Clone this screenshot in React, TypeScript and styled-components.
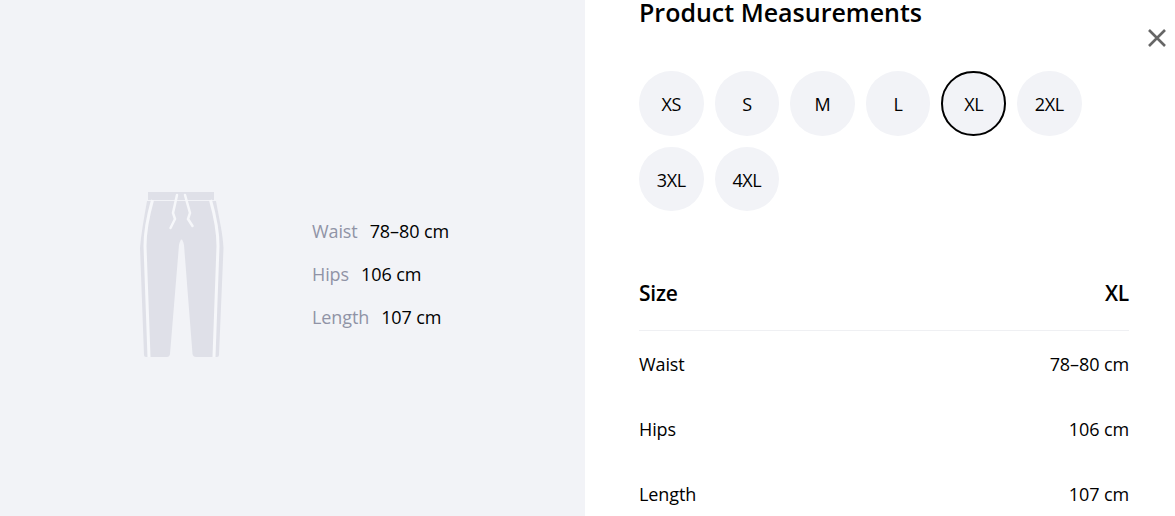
import React from "react";
import styled, { createGlobalStyle } from "styled-components";

const GlobalStyle = createGlobalStyle`
  html, body {
    margin: 0;
    padding: 0;
    background: #fff;
    overflow: hidden;
  }
  body {
    font-family: "Open Sans", "Noto Sans", sans-serif;
    color: #000;
  }
`;

const Page = styled.div`
  position: relative;
  display: flex;
  width: 1175px;
  height: 516px;
  overflow: hidden;
`;

// ===============================
// LEFT PREVIEW
// ===============================
const Preview = styled.section`
  flex: 0 0 585px;
  box-sizing: border-box;
  height: 516px;
  padding: 190px 0 0 140px;
  background: #f2f3f7;
  display: flex;
  gap: 88px;
  align-items: flex-start;
`;

const PantsIcon = styled.svg`
  display: block;
  width: 84px;
  height: 167px;
  flex: none;
`;

const SpecList = styled.dl`
  margin: 29px 0 0;
  display: flex;
  flex-direction: column;
  gap: 19px;
`;

const SpecRow = styled.div`
  display: flex;
  gap: 12px;
  font-size: 18px;
  line-height: 24px;
  letter-spacing: -0.1px;
`;

const SpecName = styled.dt`
  color: #9093a6;
`;

const SpecValue = styled.dd`
  margin: 0;
  color: #000;
`;

// ===============================
// RIGHT PANEL
// ===============================
const Panel = styled.section`
  flex: 1;
  box-sizing: border-box;
  padding: 0 46px 0 54px;
`;

const Title = styled.h2`
  margin: 0;
  font-size: 25px;
  line-height: 24px;
  font-weight: 600;
`;

const CloseButton = styled.button`
  position: absolute;
  top: 28px;
  left: 1147px;
  width: 20px;
  height: 20px;
  padding: 0;
  border: 0;
  background: none;
  color: #666;
  svg {
    display: block;
  }
`;

const SizeGrid = styled.div`
  margin-top: 47px;
  display: flex;
  flex-wrap: wrap;
  gap: 11px;
  width: 460px;
`;

const SizeChip = styled.button<{ $active?: boolean }>`
  box-sizing: border-box;
  width: 64.6px;
  height: 64.6px;
  padding: 2px 0 0;
  border-radius: 50%;
  border: 2px solid ${({ $active }) => ($active ? "#000" : "transparent")};
  background: #f2f3f7;
  color: #000;
  font-family: inherit;
  font-size: 18px;
  letter-spacing: -0.4px;
`;

const SizeTable = styled.div`
  margin-top: 50px;
`;

const HeaderRow = styled.div`
  display: flex;
  justify-content: space-between;
  height: 70px;
  box-sizing: border-box;
  padding-top: 19px;
  border-bottom: 1px solid #eff0f3;
  font-size: 21px;
  line-height: 27px;
  font-weight: 600;
  letter-spacing: -0.2px;
`;

const DataRow = styled.div`
  display: flex;
  justify-content: space-between;
  box-sizing: border-box;
  height: 64.6px;
  padding-top: 2px;
  align-items: center;
  font-size: 18px;
  letter-spacing: -0.1px;
`;

const specs = [
  { name: "Waist", value: "78–80 cm" },
  { name: "Hips", value: "106 cm" },
  { name: "Length", value: "107 cm" },
];

const sizes = ["XS", "S", "M", "L", "XL", "2XL", "3XL", "4XL"];

const Pants = () => (
  <PantsIcon viewBox="0 0 84 167" aria-hidden="true">
    <path
      fill="#dfe0e8"
      d="M7 11H76C79 28 83 44 83.500 58L79 165Q79 167 77 167H56Q53 167 52.500 164L44 55Q41.500 44 39 55L30 164Q29.500 167 27 167H6Q4 167 4 165L0 58C1 44 4 28 7 11Z"
    />
    <rect x="8" y="2" width="66" height="8" fill="#dfe0e8" />
    <g fill="none" stroke="#f6f7fa" strokeWidth="3">
      <path d="M12.500 10C8 26 5 42 5 56L9 167" />
      <path d="M70.500 10C75 26 78 42 78 56L74 167" />
    </g>
    <g fill="none" stroke="#f6f7fa" strokeWidth="2.500" strokeLinecap="round">
      <path d="M37 5L33 23L35 29L30.500 38" />
      <path d="M45 5L50 23L48 29L52.500 36" />
    </g>
  </PantsIcon>
);

export default function App() {
  return (
    <Page>
      <GlobalStyle />
      <Preview>
        <Pants />
        <SpecList>
          {specs.map((s) => (
            <SpecRow key={s.name}>
              <SpecName>{s.name}</SpecName>
              <SpecValue>{s.value}</SpecValue>
            </SpecRow>
          ))}
        </SpecList>
      </Preview>
      <Panel>
        <Title>Product Measurements</Title>
        <SizeGrid>
          {sizes.map((s) => (
            <SizeChip key={s} $active={s === "XL"}>
              {s}
            </SizeChip>
          ))}
        </SizeGrid>
        <SizeTable>
          <HeaderRow>
            <span>Size</span>
            <span>XL</span>
          </HeaderRow>
          {specs.map((s) => (
            <DataRow key={s.name}>
              <span>{s.name}</span>
              <span>{s.value}</span>
            </DataRow>
          ))}
        </SizeTable>
      </Panel>
      <CloseButton aria-label="Close">
        <svg width="20" height="20" viewBox="0 0 20 20">
          <path d="M2 2L18 18M18 2L2 18" stroke="currentColor" strokeWidth="2.600" fill="none" />
        </svg>
      </CloseButton>
    </Page>
  );
}
